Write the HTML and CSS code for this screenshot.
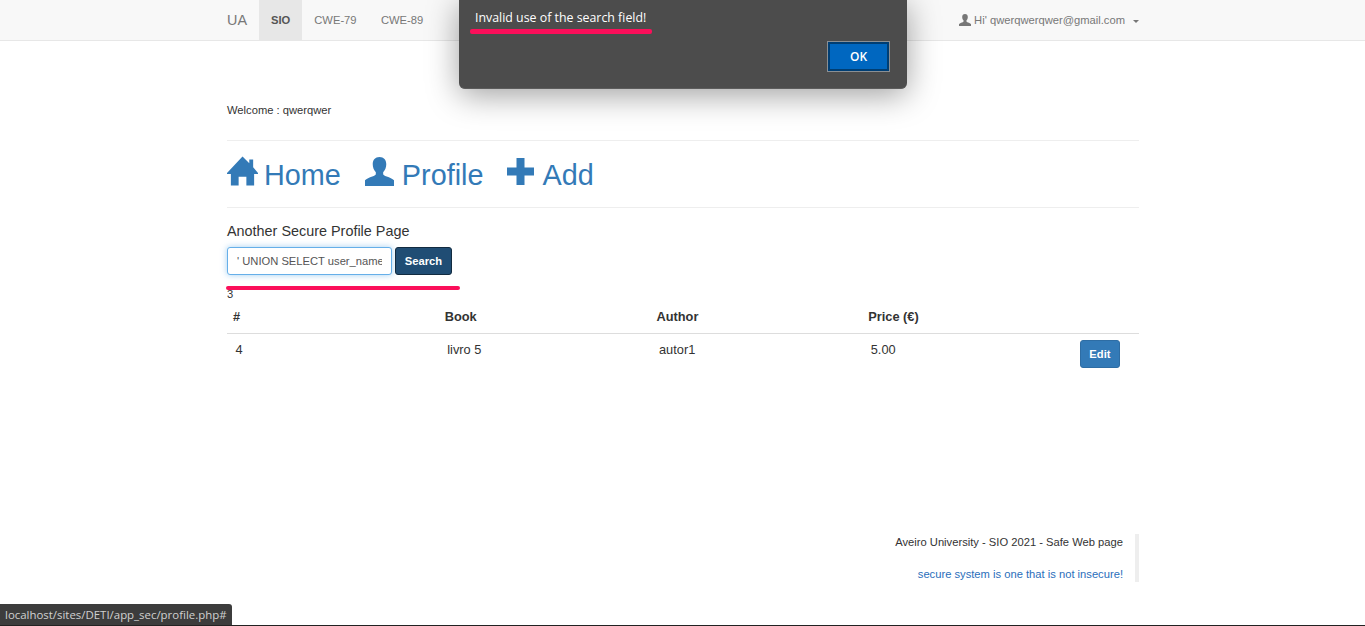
FILE: index.html
```html
<!DOCTYPE html>
<html lang="en">
<head>
    <meta charset="UTF-8">
    <title>Profile</title>
    <link rel="stylesheet" href="styles.css">
</head>
<body>
    <nav class="navbar">
        <div class="navbar-inner">
            <a class="brand" href="#">UA</a>
            <a class="nav-item active" href="#">SIO</a>
            <a class="nav-item" href="#">CWE-79</a>
            <a class="nav-item" href="#">CWE-89</a>
            <a class="nav-user" href="#">
                <svg class="user-small" viewBox="0 0 24 24"><path d="M12 0c3.600 0 5.600 2.500 5.600 6 0 2.700-1 5.200-2.600 6.700v2.100c0 .8 1 1.300 3 2.100 2.500 1 5 1.900 6 3.100V24H0v-4c1-1.200 3.500-2.100 6-3.100 2-.8 3-1.300 3-2.100v-2.100C7.400 11.200 6.400 8.700 6.400 6 6.400 2.500 8.400 0 12 0z"/></svg>
                <span>Hi' qwerqwerqwer@gmail.com</span>
                <span class="caret"></span>
            </a>
        </div>
    </nav>

    <div class="container">
        <p class="welcome">Welcome : qwerqwer</p>
        <div class="links">
            <a class="link-home" href="#">
                <svg class="icon icon-home" viewBox="0 0 32 30"><path d="M16 0l7 7V3h4v8l5 6v1h-4v12h-8v-9h-8v9H4V18H0v-1z"/></svg>
                Home
            </a>
            <a class="link-profile" href="#">
                <svg class="icon icon-user" viewBox="0 0 30 30"><path d="M15 0c4.500 0 7 3 7 7.500 0 3.300-1.200 6.300-3.200 8.200v1.800c0 1.100 1.300 1.700 3.700 2.700 3 1.200 6 2.300 7.500 3.800v6H0v-6c1.500-1.500 4.500-2.600 7.500-3.800 2.400-1 3.700-1.600 3.700-2.700v-1.800C9.200 13.800 8 10.800 8 7.500 8 3 10.500 0 15 0z"/></svg>
                Profile
            </a>
            <a class="link-add" href="#">
                <svg class="icon icon-plus" viewBox="0 0 27 27"><path d="M9.500 0h8v9.500H27v8h-9.500V27h-8v-9.500H0v-8h9.500z"/></svg>
                Add
            </a>
        </div>

        <p class="page-title">Another Secure Profile Page</p>
        <form class="search-form">
            <input class="search-input" type="text" value="' UNION SELECT user_name, password FROM users">
            <button class="btn btn-search" type="button">Search</button>
        </form>
        <div class="count">3</div>

        <table class="books">
            <thead>
                <tr><th>#</th><th>Book</th><th>Author</th><th>Price (€)</th><th></th></tr>
            </thead>
            <tbody>
                <tr>
                    <td>4</td><td>livro 5</td><td>autor1</td><td>5.00</td>
                    <td><button class="btn btn-edit" type="button">Edit</button></td>
                </tr>
            </tbody>
        </table>

        <footer class="site-footer">
            <p>Aveiro University - SIO 2021 - Safe Web page</p>
            <p class="motto">secure system is one that is not insecure!</p>
        </footer>
    </div>

    <div class="mark mark-search"></div>

    <div class="dialog">
        <p class="dialog-text">Invalid use of the search field!</p>
        <div class="mark mark-dialog"></div>
        <button class="dialog-ok" type="button">OK</button>
    </div>

    <div class="status-bar">localhost/sites/DETI/app_sec/profile.php#</div>
    <div class="bottom-line"></div>
</body>
</html>
```

FILE: styles.css
```css
html, body {
    margin: 0;
    padding: 0;
    height: 626px;
    overflow: hidden;
    background-color: #ffffff;
    font-family: "Liberation Sans", Arial, sans-serif;
    font-size: 11.2px;
    color: #333333;
}
a {
    text-decoration: none;
}
.navbar {
    height: 40px;
    background-color: #f8f8f8;
    border-bottom: 1px solid #e7e7e7;
}
.navbar-inner {
    width: 912px;
    height: 40px;
    margin-left: 227px;
    display: flex;
    align-items: center;
    color: #777777;
}
.brand {
    width: 32px;
    font-size: 14.4px;
    color: #777777;
}
.nav-item {
    height: 40px;
    line-height: 40px;
    padding: 0 12.400px 0 12px;
    color: #777777;
}
.nav-item.active {
    padding: 0 12px;
    background-color: #e7e7e7;
    color: #555555;
    font-weight: bold;
}
.nav-user {
    margin-left: auto;
    display: flex;
    align-items: center;
    color: #777777;
}
.user-small {
    width: 12px;
    height: 12px;
    fill: #777777;
    margin-right: 3px;
}
.caret {
    width: 0;
    height: 0;
    margin-left: 8px;
    margin-top: 2px;
    border-top: 3px solid #777777;
    border-left: 3px solid transparent;
    border-right: 3px solid transparent;
}
.container {
    width: 912px;
    margin-left: 227px;
}
.welcome {
    margin: 0;
    padding-top: 63px;
    height: 36px;
    line-height: 13px;
    color: #333333;
    border-bottom: 1px solid #eeeeee;
}
.links {
    height: 67px;
    box-sizing: border-box;
    padding-top: 3px;
    display: flex;
    align-items: center;
    border-bottom: 1px solid #eeeeee;
}
.links a {
    display: flex;
    align-items: center;
    font-size: 28.8px;
    color: #337ab7;
}
.link-profile {
    margin-left: 24px;
}
.link-add {
    margin-left: 24px;
}
.icon {
    fill: #337ab7;
    display: block;
}
.icon-home {
    width: 31px;
    height: 30px;
    margin-top: -10px;
    margin-right: 6px;
}
.icon-user {
    width: 29px;
    height: 29px;
    margin-top: -8px;
    margin-right: 8px;
}
.icon-plus {
    width: 27px;
    height: 27px;
    margin-top: -8px;
    margin-right: 8px;
}
.page-title {
    margin: 15px 0 0;
    font-size: 14.4px;
    line-height: 16px;
}
.search-form {
    margin-top: 8px;
    display: flex;
    gap: 3px;
}
.search-input {
    width: 165px;
    height: 28px;
    box-sizing: border-box;
    padding: 0 9px;
    border: 1px solid #66afe9;
    border-radius: 3px;
    box-shadow: 0 0 6px rgba(102, 175, 233, 0.6);
    font-family: "Liberation Sans", Arial, sans-serif;
    font-size: 11.2px;
    color: #555555;
    outline: none;
}
.btn {
    border-radius: 3px;
    font-family: "Liberation Sans", Arial, sans-serif;
    font-size: 11.2px;
    font-weight: bold;
    color: #ffffff;
    padding: 0;
}
.btn-search {
    width: 57px;
    height: 28px;
    background-color: #204d74;
    border: 1px solid #122b40;
}
.count {
    margin-top: 13px;
    height: 12px;
    line-height: 13px;
}
.books {
    width: 912px;
    table-layout: fixed;
    border-collapse: collapse;
    font-size: 12.8px;
}
.books th {
    box-sizing: border-box;
    width: 211.7px;
    height: 33px;
    padding: 0 0 0 6px;
    text-align: left;
    font-size: 12.8px;
    color: #333333;
    border-bottom: 1px solid #dddddd;
}
.books th:last-child {
    width: 65px;
}
.books td {
    box-sizing: border-box;
    height: 40px;
    padding: 0 0 0 8.500px;
    vertical-align: top;
    line-height: 32px;
}
.books td:last-child {
    padding: 6px 0 0 6px;
    line-height: normal;
}
.btn-edit {
    width: 40px;
    height: 28px;
    background-color: #337ab7;
    border: 1px solid #2e6da4;
}
.site-footer {
    margin-top: 161px;
    height: 48px;
    padding-right: 12px;
    text-align: right;
    border-right: 4px solid #eeeeee;
    width: 896px;
}
.site-footer p {
    margin: 0;
    height: 32px;
    line-height: 16px;
    color: #333333;
}
.site-footer .motto {
    height: 16px;
    color: #2a6ebb;
}
.mark {
    position: absolute;
    height: 4.500px;
    background-color: #fb0f5a;
    border-radius: 2px;
}
.mark-search {
    left: 226px;
    top: 285.500px;
    width: 234px;
}
.dialog {
    position: absolute;
    left: 459px;
    top: -1px;
    width: 448px;
    height: 90px;
    box-sizing: border-box;
    background-color: #4c4c4c;
    border-radius: 0 0 6px 6px;
    border-bottom: 1px solid #5c5c5c;
    box-shadow: 0 6px 32px rgba(0, 0, 0, 0.38);
    font-family: "Open Sans", "Noto Sans", sans-serif;
}
.dialog-text {
    position: absolute;
    left: 16px;
    top: 10px;
    margin: 0;
    font-size: 12.360px;
    line-height: 17px;
    color: #ffffff;
}
.mark-dialog {
    left: 11px;
    top: 30px;
    width: 182px;
}
.dialog-ok {
    position: absolute;
    left: 368px;
    top: 42px;
    width: 63px;
    height: 31px;
    box-sizing: border-box;
    padding: 0;
    background-color: #0067c0;
    border: 1.500px solid #8a8f94;
    box-shadow: inset 0 0 0 2px #003e73;
    font-family: "Open Sans", "Noto Sans", sans-serif;
    font-size: 12px;
    font-weight: 600;
    color: #ffffff;
}
.status-bar {
    position: absolute;
    left: 0;
    top: 604px;
    height: 21px;
    padding: 0 5px;
    line-height: 21px;
    background-color: #3c3c3c;
    border-radius: 0 3px 0 0;
    font-family: "Open Sans", "Noto Sans", sans-serif;
    font-size: 11.430px;
    color: #d0d0d0;
}
.bottom-line {
    position: absolute;
    left: 0;
    top: 625px;
    width: 1365px;
    height: 1px;
    background-color: #222222;
}
```
